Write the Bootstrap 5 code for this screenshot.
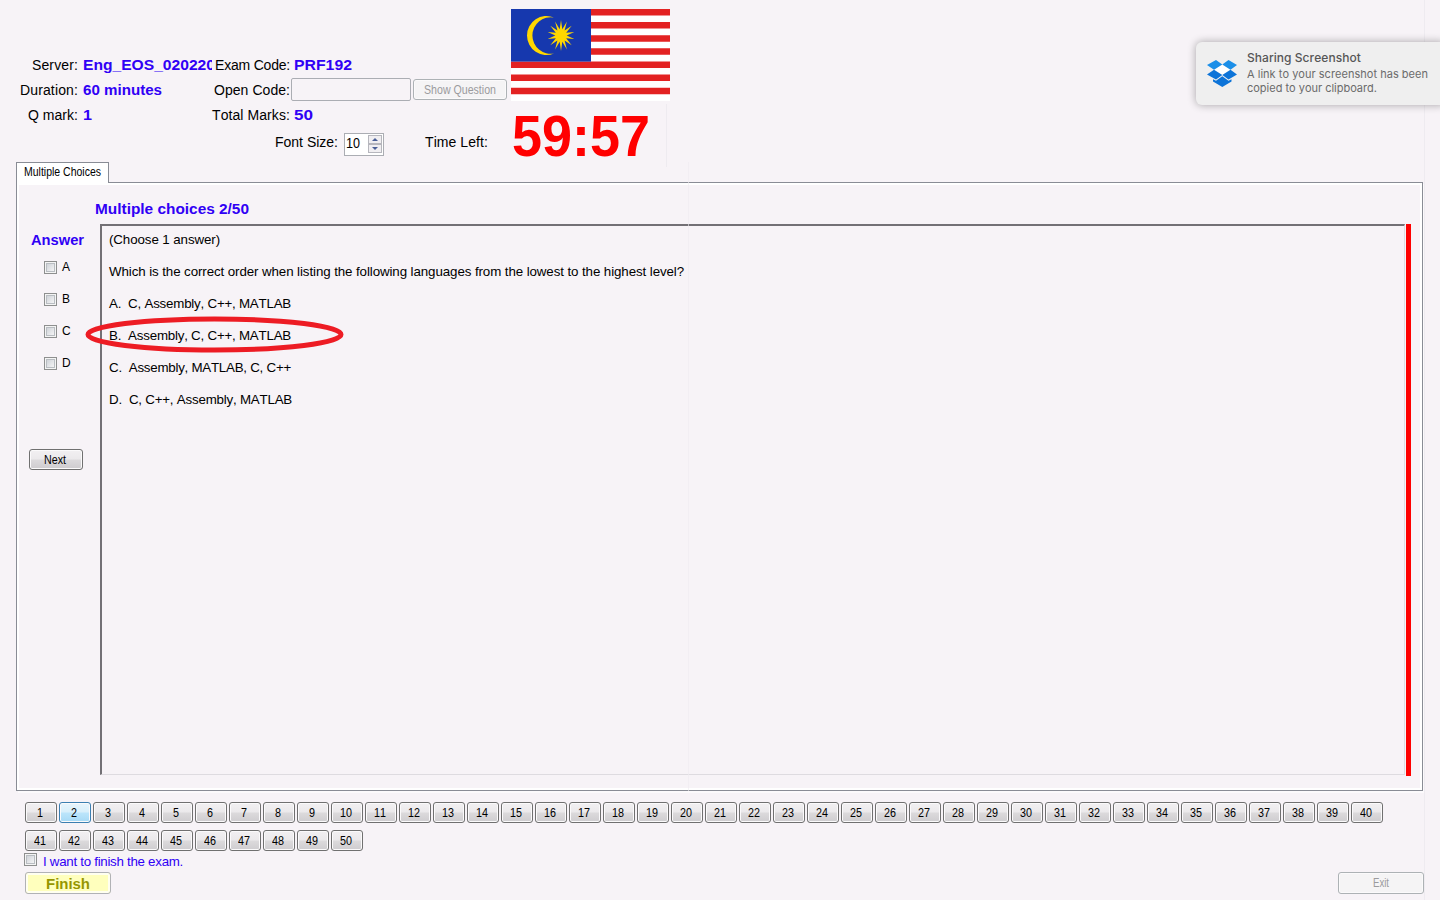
<!DOCTYPE html>
<html lang="en">
<head>
<meta charset="utf-8">
<title>Exam</title>
<link href="https://cdn.jsdelivr.net/npm/bootstrap@5.3.0/dist/css/bootstrap.min.css" rel="stylesheet">
<style>
body{width:1440px;height:900px;overflow:hidden;background:#f7f3f7;color:#000;font:14px/16px "Liberation Sans",Arial,sans-serif;position:relative}
[data-w]{display:inline-block;white-space:pre;font-kerning:none;transform-origin:0 50%}
.blue{color:#3000f5}
.bold{font-weight:700}
.top-area{height:162px}
.info{width:511px;padding-top:52px}
.info-grid{display:grid;grid-template-columns:78px 134px 78px 1fr;grid-auto-rows:25px;align-items:center}
.info-grid>.key{justify-self:end;white-space:nowrap}
.info-grid>.val{padding-left:5px;overflow:hidden;white-space:nowrap}
.code-input{width:120px;height:23px;border:1px solid #abadb3;border-radius:2px;background:#f7f3f7;padding:0}
.win-btn{display:flex;align-items:center;justify-content:center;height:21px;padding:0;border:1px solid #707070;border-radius:3px;color:#000;font-size:12px;line-height:14px;background:linear-gradient(#f2f0f2 0,#ebe9eb 48%,#dcdadc 52%,#cecccf 100%);box-shadow:inset 0 0 0 1px #fbfafb}
.win-btn.off{color:#9b9b9d;border-color:#adb2b5;background:#f5f4f5}
.win-btn.current{border-color:#3c7fb1;background:linear-gradient(#e8f5fc 0,#d8effb 48%,#bce5fb 52%,#a6d9f5 100%)}
.spinner-row{height:32px;margin-top:1px}
.spin{width:40px;height:23px;border:1px solid #abadb3;background:#fff}
.spin-btn{width:14px;height:9px;border:1px solid #b6b6bd;background:#f0eef1;display:flex;align-items:center;justify-content:center}
.clock{color:#f00;font-weight:700;font-size:57px;line-height:60px}
.tab-label{width:93px;height:21px;border:1px solid #898c95;border-bottom:0;background:#fff;font-size:12px;line-height:18px;position:relative;z-index:2}
.pane{width:1407px;height:609px;margin-top:-1px;border:1px solid #898c95;box-shadow:inset 0 0 0 2px #fff,2px 2px 0 #fcfafc;padding:16px 10px 0 3px}
.side{width:80px}
.cbx{width:13px;height:13px;border:1px solid #8e8f8f;background:linear-gradient(135deg,#c6cad1,#f3f3f4 80%);box-shadow:inset 0 0 0 1px #f4f4f4,inset 0 0 0 2px #b9bdc2}
.choice{height:32px}
.choice .ltr{font-size:12px;line-height:14px}
.question{width:1305px;height:551px;border-style:solid;border-width:2px 1px 1px 2px;border-color:#737075 #dedbe0 #dedbe0 #737075;padding:6px 7px;font-size:13.33px}
.question p{margin:0 0 16px;height:16px}
.redbar{width:5px;height:552px;background:#f00}
.nums{width:1368px;column-gap:2px;row-gap:7px}
.nums .win-btn{width:32px;padding-right:2px}
.mark-ring{position:absolute;left:84px;top:314px}
.notice{position:absolute;left:1196px;top:42px;width:250px;height:63px;border-radius:6px;background:#efefef;box-shadow:0 0 9px rgba(0,0,0,.33);font-family:Inter,sans-serif;color:#6b6b6b;font-size:11px;line-height:14px;padding:9px 0 0 11px}
.notice .ttl{font-size:12px;color:#565656;font-weight:500}
.finish{width:86px;height:22px;background:#ffffbd;border-color:#b1b2b5;color:#969600;font-size:14px;font-weight:700;box-shadow:inset 0 0 0 2px #fffff0}
.edge{position:absolute;width:1px;background:#eeebf0}
</style>
</head>
<body>
<div class="edge" style="left:1424px;top:0;height:900px"></div>
<div class="edge" style="left:666px;top:104px;height:63px"></div>
<div class="edge" style="left:688px;top:162px;height:629px;opacity:.6"></div>
<header class="top-area d-flex">
  <div class="info">
    <div class="info-grid">
      <span class="key"><span data-w="46">Server:</span></span><span class="val blue bold"><span data-w="132">Eng_EOS_020220</span></span>
      <span class="key"><span data-w="75">Exam Code:</span></span><span class="blue bold ps-1"><span data-w="58">PRF192</span></span>
      <span class="key"><span data-w="58">Duration:</span></span><span class="val blue bold"><span data-w="79">60 minutes</span></span>
      <span class="key"><span data-w="76">Open Code:</span></span>
      <span class="d-flex align-items-center" style="padding-left:1px;gap:2px"><input class="code-input" disabled><button class="win-btn off" style="width:94px"><span data-w="72">Show Question</span></button></span>
      <span class="key"><span data-w="50">Q mark:</span></span><span class="val blue bold"><span data-w="9">1</span></span>
      <span class="key"><span data-w="78">Total Marks:</span></span><span class="blue bold ps-1"><span data-w="19">50</span></span>
    </div>
    <div class="spinner-row d-flex align-items-center" style="padding-left:275px">
      <span data-w="63" style="margin-top:-4px">Font Size:</span>
      <div class="spin d-flex justify-content-between align-items-center" style="margin-left:6px;padding:0 1px"><span data-w="14" style="margin-top:-2px">10</span>
        <div><div class="spin-btn"><svg width="6" height="3"><path d="M0 3L3 0L6 3Z" fill="#4a5f97"/></svg></div><div class="spin-btn"><svg width="6" height="3"><path d="M0 0L3 3L6 0Z" fill="#4a5f97"/></svg></div></div>
      </div>
      <span data-w="63" style="margin:-4px 0 0 41px">Time Left:</span>
    </div>
  </div>
  <div style="padding-top:9px">
    <svg class="d-block" width="159" height="92" viewBox="0 0 159 92">
      <rect width="159" height="92" fill="#fff"/>
      <path d="M0 3.2H159M0 16.3H159M0 29.4H159M0 42.5H159M0 55.7H159M0 68.8H159M0 81.9H159" stroke="#e32222" stroke-width="6.5"/>
      <rect width="80" height="52.6" fill="#1638ae"/>
      <path d="M43 8.500A19.500 19.500 0 1 0 43 44.500A18.300 18.300 0 1 1 43 8.500Z" fill="#ffd700"/>
      <polygon id="star" fill="#ffd700"/>
    </svg>
    <div class="clock" style="padding:5px 0 0 1px"><span data-w="138">59:57</span></div>
  </div>
</header>
<main style="padding-left:16px">
  <div class="tab-label" style="padding-left:7px"><span data-w="77">Multiple Choices</span></div>
  <section class="pane">
    <div class="blue bold" style="height:25px;padding:2px 0 0 75px"><span data-w="154">Multiple choices 2/50</span></div>
    <div class="d-flex">
      <div class="side">
        <div class="blue bold" style="padding:8px 0 0 11px;height:27px"><span data-w="53">Answer</span></div>
        <div id="choices"></div>
        <button class="win-btn" style="width:54px;margin:70px 0 0 9px;padding-right:3px"><span data-w="22">Next</span></button>
      </div>
      <div class="question">
        <p><span data-w="111">(Choose 1 answer)</span></p>
        <p><span data-w="575">Which is the correct order when listing the following languages from the lowest to the highest level?</span></p>
        <p><span data-w="182">A.  C, Assembly, C++, MATLAB</span></p>
        <p><span data-w="182">B.  Assembly, C, C++, MATLAB</span></p>
        <p><span data-w="182">C.  Assembly, MATLAB, C, C++</span></p>
        <p><span data-w="183">D.  C, C++, Assembly, MATLAB</span></p>
      </div>
      <div class="redbar" style="margin-left:1px"></div>
    </div>
  </section>
  <nav class="nums d-flex flex-wrap" id="nums" style="margin:11px 0 0 9px"></nav>
</main>
<footer style="padding:2px 16px 0 24px">
  <label class="d-flex blue" style="height:19px"><span class="cbx"></span><span data-w="140" style="margin:1px 0 0 6px;font-size:13.33px">I want to finish the exam.</span></label>
  <div class="d-flex justify-content-between" style="padding-left:1px">
    <button class="win-btn finish"><span data-w="44" style="position:relative;top:1px">Finish</span></button>
    <button class="win-btn off" style="width:86px;height:22px"><span data-w="16">Exit</span></button>
  </div>
</footer>
<svg class="mark-ring" width="262" height="42"><ellipse cx="130.500" cy="20.500" rx="126.500" ry="15.500" fill="none" stroke="#ed1c24" stroke-width="5"/></svg>
<aside class="notice d-flex">
  <svg width="31" height="30" viewBox="0 0 31 30" style="margin-top:8px">
    <path d="M15.200 5.500L23 10.800L15.200 16L7 10.800Z" fill="#fff"/>
    <path d="M9 1L15.300 5.500L7 10.800L0 6Z M21.500 1L15.300 5.500L23.500 10.800L30 6Z" fill="#1b8fe8"/>
    <path d="M7 10.800L15.300 16L9 20.500L0 15.500Z M23.500 10.800L15.300 16L21.500 20.500L30 15.500Z M15.300 17.300L21.500 21.800L24.500 20.200V22.500L15.300 28L6 22.500V20.200L9 21.800Z" fill="#0d74d8"/>
  </svg>
  <div style="margin-left:9px"><div class="ttl"><span data-w="114">Sharing Screenshot</span></div>
  <div style="margin-top:2px"><span data-w="181">A link to your screenshot has been</span><br><span data-w="130">copied to your clipboard.</span></div></div>
</aside>
<script src="https://cdn.jsdelivr.net/npm/bootstrap@5.3.0/dist/js/bootstrap.bundle.min.js"></script>
<script>
document.getElementById('choices').innerHTML=['A','B','C','D'].map(c=>'<label class="choice d-flex" style="padding:10px 0 0 24px"><span class="cbx"></span><span class="ltr" style="margin-left:5px;margin-top:-1px">'+c+'</span></label>').join('');
document.getElementById('nums').innerHTML=Array.from({length:50},(_,i)=>'<button class="win-btn'+(i===1?' current':'')+'"><span data-w="'+(i<9?6:12)+'">'+(i+1)+'</span></button>').join('');
// 14-pointed star
let pts=[];
for(let i=0;i<28;i++){const r=i%2?6.5:15.5,a=i*Math.PI/14-Math.PI/2;pts.push((50+r*.88*Math.cos(a)).toFixed(1)+','+(26.5+r*Math.sin(a)).toFixed(1));}
document.getElementById('star').setAttribute('points',pts.join(' '));
// fit each label to its own set width: bold and button text is stretched, the rest is respaced
document.querySelectorAll('[data-w]').forEach(e=>{
  const n=e.textContent.length,w=e.getBoundingClientRect().width,t=+e.dataset.w;
  if(e.closest('.bold,.win-btn,.clock,.tab-label,.spin')){
    e.style.transform='scaleX('+(t/w).toFixed(4)+')';
    e.style.marginRight=(t-w).toFixed(2)+'px';
  }else e.style.letterSpacing=((t-w)/n).toFixed(3)+'px';
});
</script>
</body>
</html>
